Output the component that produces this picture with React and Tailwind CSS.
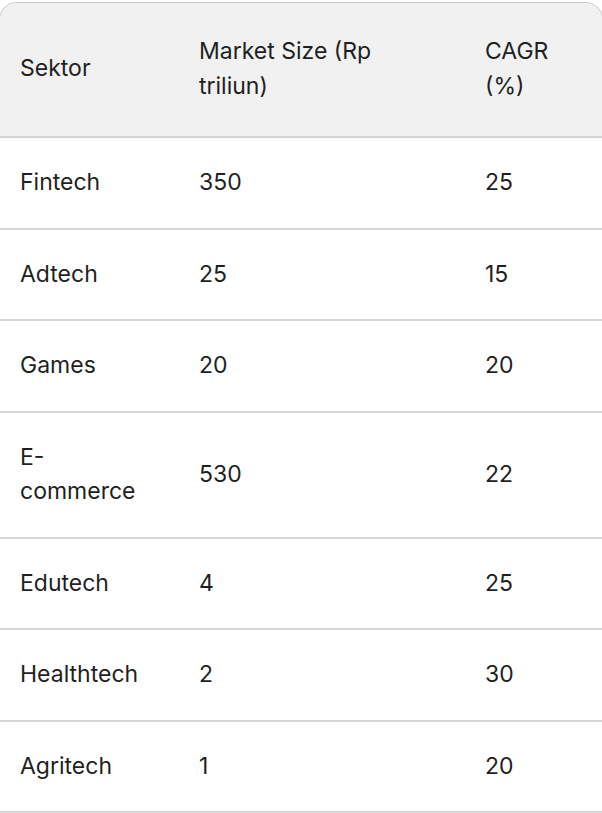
import React from 'react';

const rows = [
  { sector: 'Fintech', size: '350', cagr: '25' },
  { sector: 'Adtech', size: '25', cagr: '15' },
  { sector: 'Games', size: '20', cagr: '20' },
  { sector: <>E-<br />commerce</>, size: '530', cagr: '22' },
  { sector: 'Edutech', size: '4', cagr: '25' },
  { sector: 'Healthtech', size: '2', cagr: '30' },
  { sector: 'Agritech', size: '1', cagr: '20' },
];

const cols = 'grid grid-cols-[179px_286px_1fr] items-center';

const App = () => {
  return (
    <div className="w-[602px] h-[813px] overflow-hidden bg-white pt-[2px] text-[#1f1f1f] font-['Inter',sans-serif] text-[23px] leading-[34.5px]">
      <div className="-mx-px border-x border-t border-[#c9c9c9] rounded-t-[18px] overflow-hidden">
        {/* header */}
        <div className={`${cols} bg-[#f1f1f1] border-b-2 border-[#d2d2d2] pt-[31px] pb-[33px]`}>
          <div className="pl-5">Sektor</div>
          <div className="pl-5">Market Size (Rp<br />triliun)</div>
          <div className="pl-5">CAGR<br />(%)</div>
        </div>

        {rows.map((row, i) => (
          <div key={i} className={`${cols} border-b-2 border-[#d6d6d6] pt-[27px] pb-[28px]`}>
            <div className="pl-5">{row.sector}</div>
            <div className="pl-5">{row.size}</div>
            <div className="pl-5">{row.cagr}</div>
          </div>
        ))}
      </div>
    </div>
  );
};

export default App;
